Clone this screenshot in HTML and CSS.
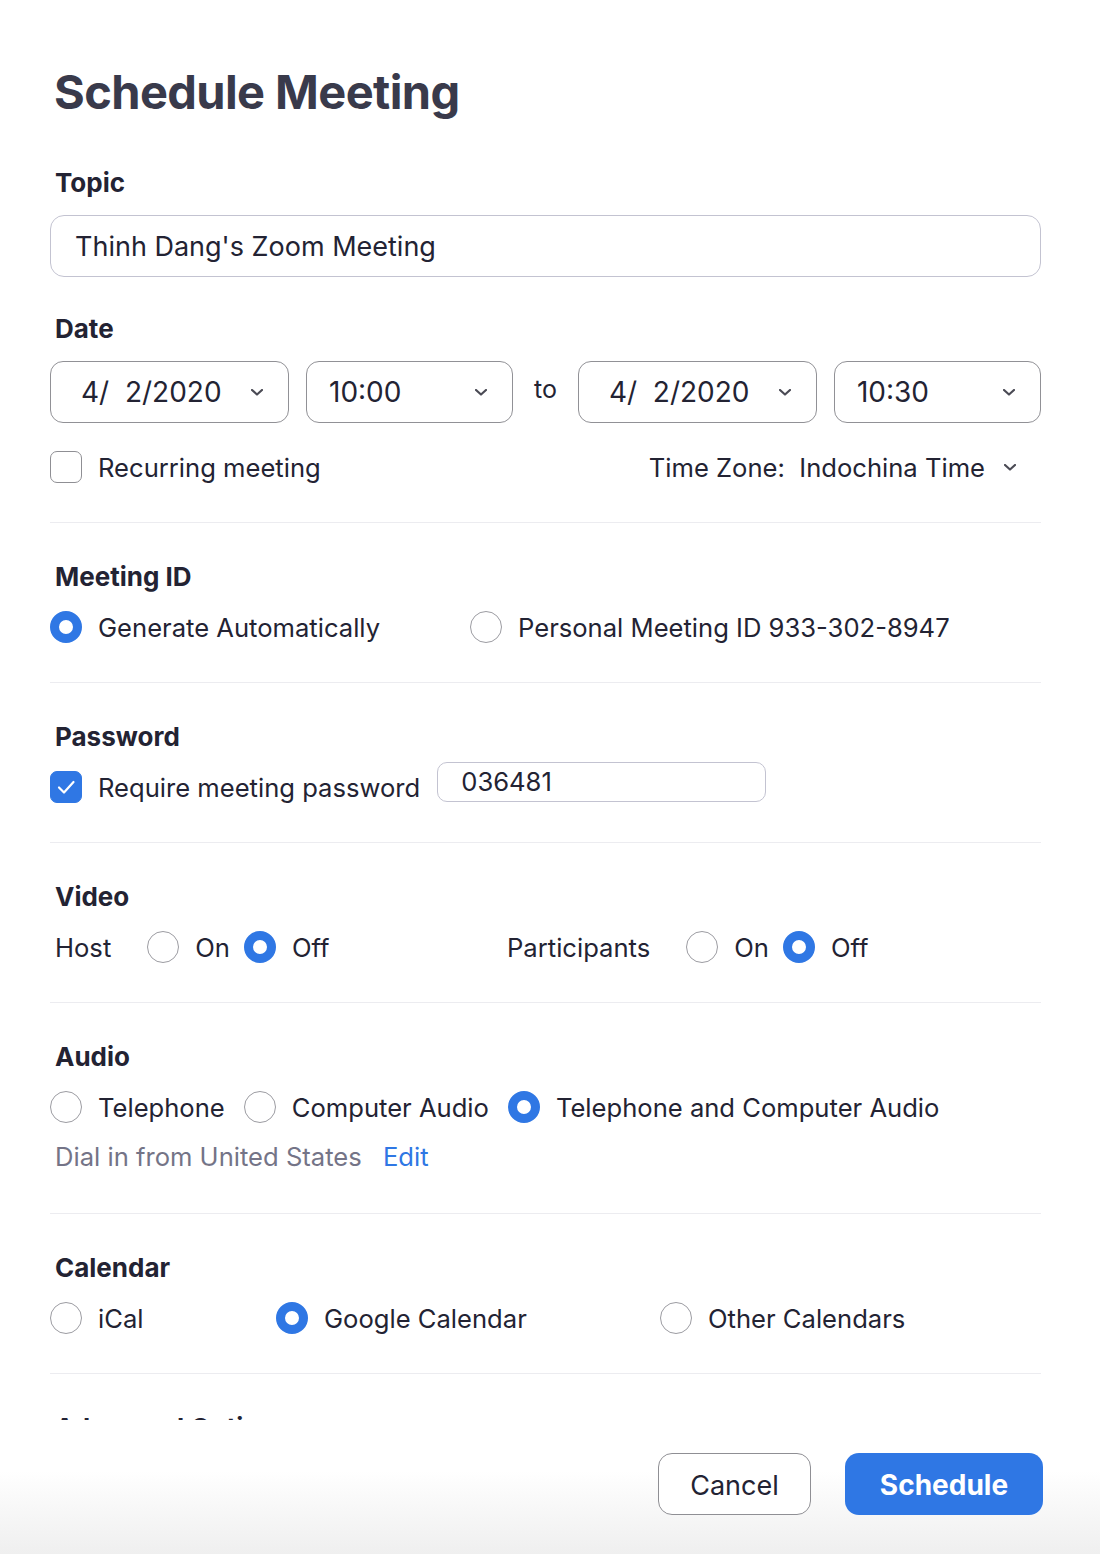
FILE: index.html
```html
<!DOCTYPE html>
<html lang="en">
<head>
<meta charset="utf-8">
<title>Schedule Meeting</title>
<link rel="stylesheet" href="styles.css">
</head>
<body>
<main class="page">
  <h1 class="title">Schedule Meeting</h1>

  <section class="block block-topic">
    <div class="label">Topic</div>
    <div class="field topic">Thinh Dang's Zoom Meeting</div>
  </section>

  <section class="block block-date">
    <div class="label">Date</div>
    <div class="date-row">
      <div class="select wide"><span class="val">4/  2/2020</span><svg class="chev" viewBox="0 0 12 7" width="12" height="7"><polyline points="1,1 6,5.5 11,1"/></svg></div>
      <div class="select narrow"><span class="val">10:00</span><svg class="chev" viewBox="0 0 12 7" width="12" height="7"><polyline points="1,1 6,5.5 11,1"/></svg></div>
      <span class="to">to</span>
      <div class="select wide"><span class="val">4/  2/2020</span><svg class="chev" viewBox="0 0 12 7" width="12" height="7"><polyline points="1,1 6,5.5 11,1"/></svg></div>
      <div class="select narrow"><span class="val">10:30</span><svg class="chev" viewBox="0 0 12 7" width="12" height="7"><polyline points="1,1 6,5.5 11,1"/></svg></div>
    </div>
    <div class="recurring-row">
      <label class="opt"><span class="checkbox"></span><span>Recurring meeting</span></label>
      <div class="tz"><span class="val">Time Zone:  Indochina Time</span><svg class="chev" viewBox="0 0 12 7" width="12" height="7"><polyline points="1,1 6,5.5 11,1"/></svg></div>
    </div>
  </section>

  <section class="block sep">
    <div class="label">Meeting ID</div>
    <div class="row">
      <label class="opt col-420"><span class="radio on"></span><span>Generate Automatically</span></label>
      <label class="opt"><span class="radio"></span><span>Personal Meeting ID 933-302-8947</span></label>
    </div>
  </section>

  <section class="block sep">
    <div class="label">Password</div>
    <div class="row">
      <label class="opt"><span class="checkbox checked"><svg viewBox="0 0 32 32" width="32" height="32"><polyline points="9,16.5 14,21.5 23.5,11"/></svg></span><span>Require meeting password</span></label>
      <div class="field pw">036481</div>
    </div>
  </section>

  <section class="block sep">
    <div class="label">Video</div>
    <div class="row">
      <div class="vgroup">
        <span class="vlabel">Host</span>
        <label class="opt"><span class="radio"></span><span>On</span></label>
        <label class="opt"><span class="radio on"></span><span>Off</span></label>
      </div>
      <div class="vgroup">
        <span class="vlabel">Participants</span>
        <label class="opt"><span class="radio"></span><span>On</span></label>
        <label class="opt"><span class="radio on"></span><span>Off</span></label>
      </div>
    </div>
  </section>

  <section class="block sep">
    <div class="label">Audio</div>
    <div class="row audio-row">
      <label class="opt"><span class="radio"></span><span>Telephone</span></label>
      <label class="opt"><span class="radio"></span><span>Computer Audio</span></label>
      <label class="opt"><span class="radio on"></span><span>Telephone and Computer Audio</span></label>
    </div>
    <div class="dial">Dial in from United States <a class="edit">Edit</a></div>
  </section>

  <section class="block sep">
    <div class="label">Calendar</div>
    <div class="row">
      <label class="opt col-226"><span class="radio"></span><span>iCal</span></label>
      <label class="opt col-384"><span class="radio on"></span><span>Google Calendar</span></label>
      <label class="opt"><span class="radio"></span><span>Other Calendars</span></label>
    </div>
  </section>

  <section class="block sep">
    <div class="label">Advanced Options</div>
  </section>
</main>

<footer class="footer">
  <button class="btn cancel">Cancel</button>
  <button class="btn primary">Schedule</button>
</footer>
</body>
</html>
```

FILE: styles.css
```css
html, body {
  margin: 0;
  padding: 0;
  background: #ffffff;
}
body {
  font-family: Inter, "Noto Sans", "Liberation Sans", sans-serif;
  color: #232333;
  height: 1554px;
  overflow: hidden;
}
.page {
  width: 991px;
  padding: 0 0 0 50px;
}
.title {
  margin: 0;
  padding: 62px 0 0 4px;
  font-size: 47px;
  line-height: 60px;
  font-weight: 700;
  color: #393a4b;
  letter-spacing: -0.6px;
}
.label {
  font-size: 26px;
  line-height: 28px;
  font-weight: 700;
  padding-left: 5px;
  color: #232333;
}
.block-topic {
  padding-top: 47px;
}
.block-topic .label {
  margin-bottom: 18px;
}
.field {
  box-sizing: border-box;
  border: 1.5px solid #c3c3d1;
  background: #fff;
  font-size: 27px;
}
.topic {
  height: 62px;
  border-radius: 14px;
  padding-left: 24px;
  display: flex;
  align-items: center;
}
.block-date {
  padding-top: 38px;
}
.block-date .label {
  margin-bottom: 18px;
}
.date-row {
  display: flex;
  align-items: center;
}
.select {
  box-sizing: border-box;
  height: 62px;
  border: 1.5px solid #919196;
  border-radius: 13px;
  display: flex;
  align-items: center;
  justify-content: space-between;
  padding-right: 25px;
  font-size: 28px;
}
.val {
  white-space: pre;
}
.select.wide {
  width: 239px;
  padding-left: 30px;
}
.select.narrow {
  width: 207px;
  padding-left: 22px;
  margin-left: 17px;
}
.to {
  font-size: 25px;
  margin: -6px 21px 0 21px;
}
.chev {
  fill: none;
  stroke: #4b4b55;
  stroke-width: 2.2;
  stroke-linecap: round;
  stroke-linejoin: round;
}
.recurring-row {
  display: flex;
  justify-content: space-between;
  align-items: center;
  margin-top: 28px;
  padding-right: 25px;
  height: 32px;
}
.tz {
  display: flex;
  align-items: center;
  gap: 19px;
  font-size: 25.6px;
}
.opt {
  display: inline-flex;
  align-items: center;
  gap: 16px;
  font-size: 25.6px;
  white-space: nowrap;
}
.checkbox {
  box-sizing: border-box;
  width: 32px;
  height: 32px;
  border: 1.5px solid #8f8f94;
  border-radius: 7px;
  background: #fff;
  flex: none;
  display: flex;
}
.checkbox.checked {
  background: #2f77e4;
  border-color: #2f77e4;
}
.checkbox svg {
  margin: -1.5px;
  fill: none;
  stroke: #fff;
  stroke-width: 2.2;
  stroke-linecap: round;
  stroke-linejoin: round;
}
.radio {
  box-sizing: border-box;
  width: 32px;
  height: 32px;
  border-radius: 50%;
  border: 1.5px solid #9c9ca2;
  background: #fff;
  flex: none;
}
.radio.on {
  border: 9px solid #2f77e4;
}
.block.sep {
  border-top: 1.5px solid #ececf0;
  margin-top: 39px;
  padding-top: 40px;
}
.block.sep .label {
  margin-bottom: 20px;
}
.row {
  display: flex;
  align-items: center;
  height: 32px;
}
.col-420 {
  width: 420px;
}
.col-226 {
  width: 226px;
}
.col-384 {
  width: 384px;
}
.pw {
  width: 329px;
  height: 40px;
  border-radius: 10px;
  margin-left: 17px;
  margin-bottom: 11px;
  padding-left: 23px;
  display: flex;
  align-items: center;
  font-size: 25.6px;
}
.vgroup {
  width: 452px;
  display: flex;
  align-items: center;
  gap: 14px;
  padding-left: 5px;
}
.vgroup:last-child {
  padding-left: 0;
}
.vlabel {
  font-size: 25.6px;
  margin-right: 22px;
}
.audio-row {
  gap: 19px;
}
.dial {
  margin-top: 20px;
  padding-bottom: 3px;
  padding-left: 5px;
  font-size: 25.6px;
  line-height: 28px;
  color: #747487;
}
.edit {
  color: #2f77e4;
  margin-left: 14px;
}
.footer {
  position: fixed;
  left: 0;
  right: 0;
  bottom: 0;
  height: 134px;
  box-sizing: border-box;
  padding: 33px 57px 0 0;
  display: flex;
  justify-content: flex-end;
  align-items: flex-start;
  gap: 34px;
  background: linear-gradient(to bottom, #ffffff 0%, #ffffff 38%, #efefef 100%);
}
.btn {
  box-sizing: border-box;
  height: 62px;
  border-radius: 14px;
  padding-top: 3px;
  font-family: Inter, "Noto Sans", "Liberation Sans", sans-serif;
  font-size: 27px;
  cursor: pointer;
}
.cancel {
  width: 153px;
  background: #fff;
  border: 1.5px solid #8f8f94;
  color: #232333;
}
.primary {
  width: 198px;
  background: #2f77e4;
  border: none;
  color: #fff;
  font-weight: 700;
  font-size: 28px;
}
```
